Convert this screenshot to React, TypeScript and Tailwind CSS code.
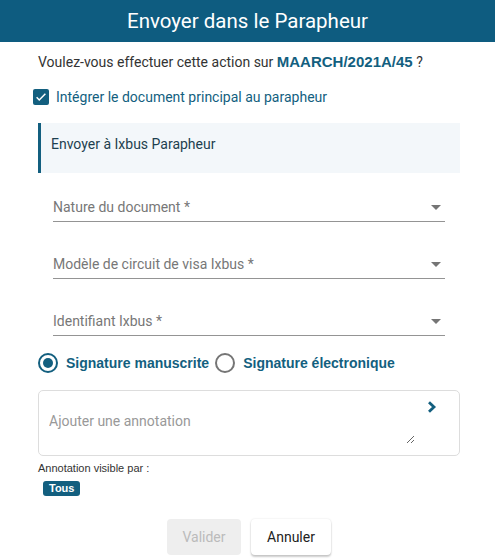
import React, { useState } from 'react';

const fields = ['Nature du document *', 'Modèle de circuit de visa Ixbus *', 'Identifiant Ixbus *'];

const arial = { fontFamily: '"Liberation Sans", Arial, sans-serif' };

const App: React.FC = () => {
    const [checked, setChecked] = useState(true);
    const [signature, setSignature] = useState<'manuscrite' | 'electronique'>('manuscrite');

    return (
        <div className="w-[495px] h-[560px] bg-white overflow-hidden" style={{ fontFamily: 'Roboto, "Liberation Sans", sans-serif' }}>
            {/* Title bar */}
            <div className="h-[42px] bg-[#0e5c80] flex items-center justify-center">
                <h1 className="text-[20.5px] text-white font-normal">Envoyer dans le Parapheur</h1>
            </div>

            <div className="pl-[38px] pr-[35px]">
                <p className="mt-[10px] h-[20px] leading-[20px] text-[14px] text-[#333]">
                    Voulez-vous effectuer cette action sur <b className="font-bold text-[15px] text-[#135f7f]" style={arial}>MAARCH/2021A/45</b> ?
                </p>

                <label className="mt-[15px] -ml-[5px] flex items-center h-[20px] cursor-pointer" onClick={() => setChecked(!checked)}>
                    <span className={`w-[16px] h-[16px] rounded-[2px] flex items-center justify-center ${checked ? 'bg-[#135f7f]' : 'border-2 border-[#757575]'}`}>
                        {checked && (
                            <svg viewBox="0 0 24 24" className="w-[14px] h-[14px]" fill="none" stroke="white" strokeWidth="2.6">
                                <path d="M4.5 12.5l4.5 4.5 10.5-10.5" />
                            </svg>
                        )}
                    </span>
                    <span className="ml-[7px] text-[14px] text-[#135f7f]">Intégrer le document principal au parapheur</span>
                </label>

                {/* Section */}
                <div className="mt-[16px] h-[50px] bg-[#f3f7fa] border-l-[3px] border-[#135f7f] pl-[10px] pt-[9px]">
                    <span className="text-[14px] text-[#1d3f4f] leading-[20px]">Envoyer à Ixbus Parapheur</span>
                </div>

                <div className="mx-[15px] mt-[23px] flex flex-col gap-[31px]">
                    {fields.map((label) => (
                        <div key={label} className="h-[26px] flex flex-col">
                            <div className="flex items-center justify-between h-[22px]">
                                <span className="text-[14px] text-[#777]">{label}</span>
                                <svg width="10" height="5" viewBox="0 0 10 5" className="mr-[4px]"><path d="M0 0h10L5 5z" fill="#757575" /></svg>
                            </div>
                            <div className="mt-[3px] h-px bg-[#949494]" />
                        </div>
                    ))}
                </div>

                {/* Radios */}
                <div className="mt-[16px] flex items-center h-[22px]">
                    <button className="flex items-center" onClick={() => setSignature('manuscrite')}>
                        <span className={`w-[20px] h-[20px] rounded-full border-2 flex items-center justify-center ${signature === 'manuscrite' ? 'border-[#135f7f]' : 'border-[#757575]'}`}>
                            {signature === 'manuscrite' && <span className="w-[10px] h-[10px] rounded-full bg-[#135f7f]" />}
                        </span>
                        <span className="ml-[8px] text-[14px] font-bold text-[#135f7f]" style={arial}>Signature manuscrite</span>
                    </button>
                    <button className="flex items-center ml-[6px]" onClick={() => setSignature('electronique')}>
                        <span className={`w-[20px] h-[20px] rounded-full border-2 flex items-center justify-center ${signature === 'electronique' ? 'border-[#135f7f]' : 'border-[#757575]'}`}>
                            {signature === 'electronique' && <span className="w-[10px] h-[10px] rounded-full bg-[#135f7f]" />}
                        </span>
                        <span className="ml-[8px] text-[14px] font-bold text-[#135f7f]" style={arial}>Signature électronique</span>
                    </button>
                </div>

                {/* Annotation */}
                <div className="mt-[16px] h-[66px] border border-[#ddd] rounded-[5px] flex pl-[10px] pr-[22px]">
                    <textarea
                        placeholder="Ajouter une annotation"
                        className="flex-1 mt-[7px] mb-[11px] text-[14px] text-[#333] placeholder:text-[#999] outline-none pt-[13px] leading-[20px]"
                    />
                    <svg viewBox="0 0 10 12" className="w-[10px] h-[12px] ml-[12px] mt-[10px]" fill="none" stroke="#135f7f" strokeWidth="2.8">
                        <path d="M2 1.2l5 4.8-5 4.8" />
                    </svg>
                </div>

                <p className="mt-[5px] text-[11px] text-[#333] leading-[14px]" style={arial}>Annotation visible par :</p>
                <span
                    className="inline-block mt-[6px] ml-[5px] h-[15px] px-[6px] rounded-[3px] bg-[#135f7f] text-white text-[11px] font-bold leading-[15px]"
                    style={arial}
                >
                    Tous
                </span>
            </div>

            {/* Actions */}
            <div className="mt-[20px] flex justify-center gap-[10px] pl-[3px]">
                <button disabled className="w-[74px] h-[36px] rounded-[4px] bg-[#eeeeee] text-[#bbb] text-[14px]">Valider</button>
                <button className="w-[80px] h-[36px] rounded-[4px] bg-white text-[#222] text-[14px] shadow-[0_2px_2px_rgba(0,0,0,0.2),0_0_2px_rgba(0,0,0,0.12)]">Annuler</button>
            </div>
        </div>
    );
};

export default App;
